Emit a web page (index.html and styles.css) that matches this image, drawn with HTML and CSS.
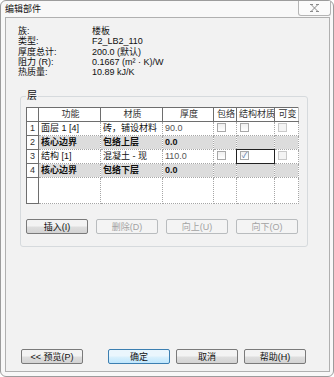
FILE: index.html
```html
<!DOCTYPE html>
<html lang="zh-CN">
<head>
    <meta charset="UTF-8">
    <title>编辑部件</title>
    <link rel="stylesheet" href="styles.css">
</head>
<body>
<div class="window">
    <!-- 标题栏 -->
    <div class="titlebar">
        <span class="title">编辑部件</span>
        <div class="close">
            <svg width="9" height="8" viewBox="0 0 9 8">
                <path d="M1 0.5 L8 7.5 M8 0.5 L1 7.5 M0 0.5 H3 M6 0.5 H9 M0 7.5 H3 M6 7.5 H9" stroke="#8a8a8a" stroke-width="1" fill="none"/>
            </svg>
        </div>
    </div>

    <div class="client">
        <!-- 类型信息 -->
        <div class="info">
            <span>族:</span><span>楼板</span>
            <span>类型:</span><span>F2_LB2_110</span>
            <span>厚度总计:</span><span>200.0 (默认)</span>
            <span>阻力 (R):</span><span>0.1667 (m² · K)/W</span>
            <span>热质量:</span><span>10.89 kJ/K</span>
        </div>

        <!-- 层 -->
        <fieldset class="layers">
            <legend>层</legend>
            <table class="grid">
                <colgroup>
                    <col style="width:12px"><col style="width:62px"><col style="width:62px"><col style="width:51px">
                    <col style="width:23px"><col style="width:38px"><col style="width:24px">
                </colgroup>
                <tr class="head">
                    <th class="num"></th><th>功能</th><th>材质</th><th>厚度</th><th>包络</th><th>结构材质</th><th>可变</th>
                </tr>
                <tr>
                    <td class="num">1</td><td>面层 1 [4]</td><td>砖，铺设材料</td><td class="dim">90.0</td>
                    <td><span class="chk"></span></td><td><span class="chk"></span></td><td><span class="chk off"></span></td>
                </tr>
                <tr class="core">
                    <td class="num">2</td><td>核心边界</td><td>包络上层</td><td>0.0</td><td></td><td></td><td></td>
                </tr>
                <tr>
                    <td class="num">3</td><td>结构 [1]</td><td>混凝土 - 现</td><td class="dim">110.0</td>
                    <td><span class="chk"></span></td><td class="focus"><span class="chk on">✓</span></td><td><span class="chk off"></span></td>
                </tr>
                <tr class="core">
                    <td class="num">4</td><td>核心边界</td><td>包络下层</td><td>0.0</td><td></td><td></td><td></td>
                </tr>
                <tr class="empty">
                    <td class="num"></td><td></td><td></td><td></td><td></td><td></td><td></td>
                </tr>
            </table>
            <div class="row-buttons">
                <button class="btn">插入(I)</button>
                <button class="btn" disabled>删除(D)</button>
                <button class="btn" disabled>向上(U)</button>
                <button class="btn" disabled>向下(O)</button>
            </div>
        </fieldset>

        <div class="footer">
            <button class="btn">&lt;&lt; 预览(P)</button>
            <button class="btn default">确定</button>
            <button class="btn">取消</button>
            <button class="btn">帮助(H)</button>
        </div>
    </div>
</div>
</body>
</html>
```

FILE: styles.css
```css
body {
    margin: 0;
    background: #ffffff;
    font-family: "Liberation Sans", "Noto Sans CJK SC", sans-serif;
    font-size: 9px;
    color: #111;
}
/* 窗口外框 */
.window {
    width: 334px;
    height: 377px;
    box-sizing: border-box;
    border: 1px solid #9c9c9c;
    border-radius: 6px;
    background: #f8f8f8;
    display: flex;
    flex-direction: column;
}
.titlebar {
    height: 16px;
    display: flex;
    align-items: center;
    justify-content: space-between;
    padding-left: 4px;
}
.title {
    font-size: 9px;
    line-height: 12px;
}
.close {
    width: 33px;
    height: 15px;
    margin-top: -2px;
    margin-right: 2px;
    box-sizing: border-box;
    border: 1px solid #b5b5b5;
    border-top: none;
    border-radius: 0 0 3px 3px;
    background: #fbfbfb;
    display: flex;
    align-items: center;
    justify-content: center;
}
.client {
    flex: 1;
    margin: 0 3px 4px 4px;
    border: 1px solid #b0b0b0;
    background: #f2f2f2;
    display: flex;
    flex-direction: column;
}
/* 类型信息 */
.info {
    display: grid;
    grid-template-columns: 74px auto;
    grid-auto-rows: 10.25px;
    line-height: 10.25px;
    padding: 8px 0 0 12px;
}
/* 层分组框 */
.layers {
    width: 288px;
    box-sizing: border-box;
    margin: 13px 0 0 14px;
    padding: 5px 5px 12px 5px;
    border: 1px solid #d6dadd;
    border-radius: 3px;
}
.layers legend {
    padding: 0 1px;
    font-size: 10px;
    line-height: 12px;
}
.grid {
    width: 272px;
    table-layout: fixed;
    border-collapse: collapse;
    background: #fff;
    border-top: 1px solid #6e6e6e;
    border-left: 1px solid #6e6e6e;
}
.grid th, .grid td {
    height: 13px;
    padding: 0 0 0 2px;
    font-weight: normal;
    text-align: left;
    white-space: nowrap;
    overflow: hidden;
    line-height: 13px;
    border: 1px dotted #a6a6a6;
}
.grid th {
    text-align: center;
    color: #333;
    border: 1px solid #6e6e6e;
    border-top: none;
}
.grid th:last-child {
    border-right: 1px solid #bdbdbd;
}
.grid .num {
    padding: 0;
    text-align: center;
    color: #333;
    background: #fff;
    border: 1px solid #6e6e6e;
    border-top: none;
}
.grid tr:not(.head) .num {
    border-bottom: 1px solid #6e6e6e;
}
.grid .core td {
    background: #dcdcdc;
    font-weight: bold;
}
.grid .core td.num {
    background: #fff;
    font-weight: normal;
}
.grid .empty td {
    height: 25px;
}
.grid .dim {
    color: #555;
}
.grid .focus {
    border: 1px solid #222;
}
.chk {
    display: inline-block;
    width: 9px;
    height: 9px;
    box-sizing: border-box;
    border: 1px solid #a8a8a8;
    background: linear-gradient(#f0f0f0, #ffffff);
    vertical-align: middle;
    margin: -2px 0 0 1px;
    font-size: 8px;
    line-height: 8px;
    text-align: center;
    color: #4a6fa5;
}
.chk.off {
    border-color: #c9c9c9;
    background: #f4f4f4;
}
/* 按钮 */
.btn {
    width: 62px;
    height: 15px;
    padding: 0;
    font-family: inherit;
    font-size: 9px;
    color: #111;
    border: 1px solid #7a7a7a;
    border-radius: 2px;
    background: linear-gradient(#f3f3f3 45%, #dedede 55%, #d3d3d3);
}
.btn:disabled {
    color: #a3a3a3;
    border-color: #b9bcbe;
    background: #f4f4f4;
}
.btn.default {
    border-color: #3c7fb1;
    background: linear-gradient(#eaf6fd 45%, #d9f0fc 55%, #bee6fd);
}
.row-buttons {
    display: flex;
    gap: 8px;
    margin-top: 15px;
}
.footer {
    margin-top: auto;
    padding: 0 0 7px 15px;
    display: flex;
    gap: 6px;
}
.footer .btn:first-child {
    margin-right: 19px;
}
```
